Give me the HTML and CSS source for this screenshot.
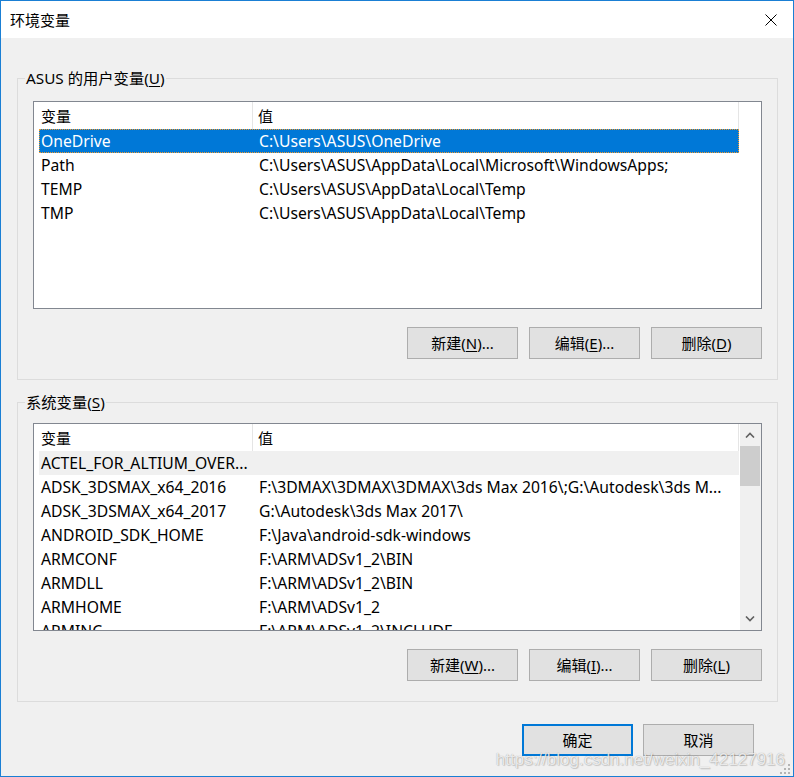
FILE: index.html
```html
<!DOCTYPE html>
<html lang="zh-CN">
    <head>
        <meta charset="UTF-8" />
        <title>环境变量</title>
        <link rel="stylesheet" href="styles.css">
    </head>
    <body>
        <div class="window">
            <!-- Title bar -->
            <div class="titlebar">
                <span class="title">环境变量</span>
                <button class="close-btn" type="button" aria-label="关闭">
                    <svg width="12" height="12" viewBox="0 0 12 12">
                        <path d="M0.5 0.5 L11.5 11.5 M11.5 0.5 L0.5 11.5" stroke="#000" stroke-width="1" fill="none" />
                    </svg>
                </button>
            </div>

            <div class="content">
                <!-- User variables -->
                <fieldset class="group">
                    <legend>ASUS 的用户变量(<u>U</u>)</legend>
                    <div class="group-body group-user">
                        <div class="listview">
                            <div class="lv-main">
                                <div class="lv-header">
                                    <div class="hcol hcol-name">变量</div>
                                    <div class="hcol hcol-value">值</div>
                                </div>
                                <div class="lv-rows">
                                    <div class="lv-row selected">
                                        <span class="cell-name">OneDrive</span>
                                        <span class="cell-value">C:\Users\ASUS\OneDrive</span>
                                    </div>
                                    <div class="lv-row">
                                        <span class="cell-name">Path</span>
                                        <span class="cell-value">C:\Users\ASUS\AppData\Local\Microsoft\WindowsApps;</span>
                                    </div>
                                    <div class="lv-row">
                                        <span class="cell-name">TEMP</span>
                                        <span class="cell-value">C:\Users\ASUS\AppData\Local\Temp</span>
                                    </div>
                                    <div class="lv-row">
                                        <span class="cell-name">TMP</span>
                                        <span class="cell-value">C:\Users\ASUS\AppData\Local\Temp</span>
                                    </div>
                                </div>
                            </div>
                        </div>
                        <div class="btn-row">
                            <button class="btn" type="button">新建(<u>N</u>)...</button>
                            <button class="btn" type="button">编辑(<u>E</u>)...</button>
                            <button class="btn" type="button">删除(<u>D</u>)</button>
                        </div>
                    </div>
                </fieldset>

                <!-- System variables -->
                <fieldset class="group group-gap">
                    <legend>系统变量(<u>S</u>)</legend>
                    <div class="group-body group-system">
                        <div class="listview">
                            <div class="lv-main">
                                <div class="lv-header">
                                    <div class="hcol hcol-name">变量</div>
                                    <div class="hcol hcol-value">值</div>
                                </div>
                                <div class="lv-rows">
                                    <div class="lv-row hover">
                                        <span class="cell-name">ACTEL_FOR_ALTIUM_OVER...</span>
                                        <span class="cell-value"></span>
                                    </div>
                                    <div class="lv-row">
                                        <span class="cell-name">ADSK_3DSMAX_x64_2016</span>
                                        <span class="cell-value">F:\3DMAX\3DMAX\3DMAX\3ds Max 2016\;G:\Autodesk\3ds M...</span>
                                    </div>
                                    <div class="lv-row">
                                        <span class="cell-name">ADSK_3DSMAX_x64_2017</span>
                                        <span class="cell-value">G:\Autodesk\3ds Max 2017\</span>
                                    </div>
                                    <div class="lv-row">
                                        <span class="cell-name">ANDROID_SDK_HOME</span>
                                        <span class="cell-value">F:\Java\android-sdk-windows</span>
                                    </div>
                                    <div class="lv-row">
                                        <span class="cell-name">ARMCONF</span>
                                        <span class="cell-value">F:\ARM\ADSv1_2\BIN</span>
                                    </div>
                                    <div class="lv-row">
                                        <span class="cell-name">ARMDLL</span>
                                        <span class="cell-value">F:\ARM\ADSv1_2\BIN</span>
                                    </div>
                                    <div class="lv-row">
                                        <span class="cell-name">ARMHOME</span>
                                        <span class="cell-value">F:\ARM\ADSv1_2</span>
                                    </div>
                                    <div class="lv-row">
                                        <span class="cell-name">ARMINC</span>
                                        <span class="cell-value">F:\ARM\ADSv1_2\INCLUDE</span>
                                    </div>
                                </div>
                            </div>
                            <div class="scrollbar">
                                <div class="sb-arrow">
                                    <svg width="10" height="6" viewBox="0 0 10 6">
                                        <path d="M1 5.5 L5 1.5 L9 5.5" stroke="#606060" stroke-width="1.6" fill="none" />
                                    </svg>
                                </div>
                                <div class="sb-track">
                                    <div class="sb-thumb"></div>
                                </div>
                                <div class="sb-arrow">
                                    <svg width="10" height="6" viewBox="0 0 10 6">
                                        <path d="M1 0.5 L5 4.5 L9 0.5" stroke="#606060" stroke-width="1.6" fill="none" />
                                    </svg>
                                </div>
                            </div>
                        </div>
                        <div class="btn-row">
                            <button class="btn" type="button">新建(<u>W</u>)...</button>
                            <button class="btn" type="button">编辑(<u>I</u>)...</button>
                            <button class="btn" type="button">删除(<u>L</u>)</button>
                        </div>
                    </div>
                </fieldset>

                <!-- Dialog buttons -->
                <div class="dialog-buttons">
                    <button class="btn btn-default" type="button">确定</button>
                    <button class="btn" type="button">取消</button>
                </div>
            </div>

            <div class="watermark">https://blog.csdn.net/weixin_42127916</div>
            <svg class="grip" width="12" height="12" viewBox="0 0 12 12">
                <rect x="9" y="1" width="2" height="2" fill="#b4b4b4" />
                <rect x="5" y="5" width="2" height="2" fill="#b4b4b4" />
                <rect x="9" y="5" width="2" height="2" fill="#b4b4b4" />
                <rect x="1" y="9" width="2" height="2" fill="#b4b4b4" />
                <rect x="5" y="9" width="2" height="2" fill="#b4b4b4" />
                <rect x="9" y="9" width="2" height="2" fill="#b4b4b4" />
            </svg>
        </div>
    </body>
</html>
```

FILE: styles.css
```css
/* --- Basic Reset --- */
* {
  margin: 0;
  padding: 0;
  box-sizing: border-box;
}

body {
  margin: 0;
  background-color: #fff;
  font-family: "Noto Sans", "Noto Sans CJK SC", sans-serif;
  font-size: 15px;
  color: #000;
}

button {
  font: inherit;
  color: inherit;
}

u {
  text-decoration: underline;
  text-underline-offset: 2px;
}

/* --- Window frame --- */
.window {
  position: relative;
  width: 794px;
  height: 777px;
  border: 1px solid #1a7fd4;
  background-color: #f0f0f0;
  display: flex;
  flex-direction: column;
  overflow: hidden;
}

.titlebar {
  height: 37px;
  background-color: #fff;
  display: flex;
  align-items: center;
  justify-content: space-between;
  padding-left: 9px;
}

.title {
  font-family: "Noto Sans CJK SC", sans-serif;
  line-height: 37px;
}

.close-btn {
  width: 46px;
  height: 37px;
  border: none;
  background: transparent;
  display: flex;
  align-items: center;
  justify-content: center;
  margin-right: -1px;
}

.content {
  flex: 1;
  padding-top: 30px;
}

/* --- Group boxes --- */
.group {
  margin: 0 15px 0 16px;
  padding: 0;
  border: 1px solid #dcdcdc;
  min-width: 0;
}

.group-gap {
  margin-top: 12px;
}

.group legend {
  margin-left: 7px;
  padding: 0 1px;
  line-height: 20px;
  font-size: 15.3px;
}

.group-body {
  padding: 13px 15px 20px 15px;
}

.group-system {
  padding-top: 11px;
}

/* --- List view --- */
.listview {
  height: 208px;
  border: 1px solid #828790;
  background-color: #fff;
  display: flex;
  overflow: hidden;
}

.lv-main {
  flex: 1;
  overflow: hidden;
}

.lv-header {
  display: flex;
  height: 27px;
}

.hcol {
  line-height: 27px;
  border-right: 1px solid #e5e5e5;
  font-family: "Noto Sans CJK SC", sans-serif;
}

.hcol-name {
  width: 219px;
  padding-left: 7px;
}

.hcol-value {
  width: 486px;
  padding-left: 5px;
}

.lv-row {
  display: flex;
  width: 700px;
  height: 24px;
  margin-left: 5px;
  line-height: 22px;
  font-size: 15.7px;
  border: 1px solid transparent;
  white-space: nowrap;
}

.lv-row.selected {
  background-color: #0078d7;
  color: #fff;
  border: 1px dotted #f39a2b;
}

.lv-row.hover {
  background-color: #f0f0f0;
}

.cell-name {
  width: 212px;
  padding-left: 1px;
  overflow: hidden;
  text-overflow: ellipsis;
}

.cell-value {
  flex: 1;
  padding-left: 7px;
  overflow: hidden;
  text-overflow: ellipsis;
}

/* --- Scrollbar --- */
.scrollbar {
  width: 21px;
  margin-left: 1px;
  background-color: #f0f0f0;
  display: flex;
  flex-direction: column;
}

.sb-arrow {
  height: 22px;
  display: flex;
  align-items: center;
  justify-content: center;
  padding-right: 1px;
}

.sb-track {
  flex: 1;
}

.sb-thumb {
  height: 40px;
  margin-right: 1px;
  background-color: #cdcdcd;
}

/* --- Buttons --- */
.btn-row {
  display: flex;
  justify-content: flex-end;
  gap: 11px;
  margin-top: 18px;
}

.btn {
  width: 111px;
  height: 32px;
  background-color: #e1e1e1;
  border: 1px solid #adadad;
  font-family: "Noto Sans", "Noto Sans CJK SC", sans-serif;
  line-height: 28px;
}

.btn-default {
  border: 2px solid #0078d7;
}

.dialog-buttons {
  display: flex;
  justify-content: flex-end;
  gap: 10px;
  margin-top: 22px;
  padding-right: 39px;
}

/* --- Overlays --- */
.watermark {
  position: absolute;
  right: 8px;
  bottom: 6px;
  font-family: "Liberation Sans", Arial, sans-serif;
  font-size: 17px;
  color: rgba(255, 255, 255, 0.8);
  text-shadow: 0 0 1px rgba(0, 0, 0, 0.35), 1px 1px 1px rgba(0, 0, 0, 0.15);
  pointer-events: none;
}

.grip {
  position: absolute;
  right: 2px;
  bottom: 1px;
}
```
